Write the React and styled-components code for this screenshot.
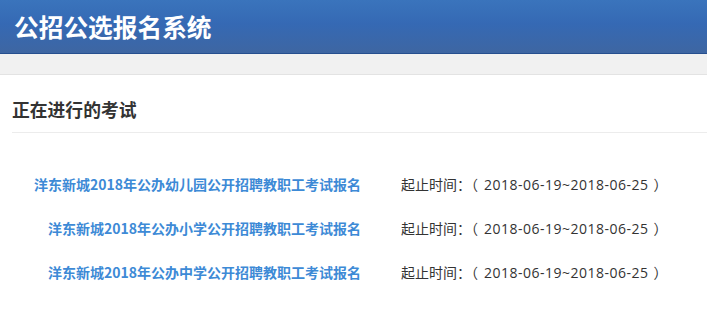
import React from "react";
import styled, { createGlobalStyle } from "styled-components";

const GlobalStyle = createGlobalStyle`
  body {
    margin: 0;
    background: #fff;
    font-family: "Noto Sans CJK SC", "Liberation Sans", sans-serif;
  }
`;

const Header = styled.header`
  height: 53px;
  display: flex;
  align-items: center;
  padding-left: 14px;
  background: linear-gradient(to bottom, #3a74bc 0%, #3569b4 45%, #3e66a2 100%);
  border-bottom: 1px solid #264f8f;
`;

const Brand = styled.h1`
  margin: 0;
  color: #fff;
  font-size: 24.7px;
  font-weight: 700;
  line-height: 1;
`;

const Strip = styled.div`
  height: 20px;
  background: #f1f1f1;
  border-bottom: 1px solid #e3e3e3;
`;

const Section = styled.section`
  padding: 0 0 0 12px;
`;

const SectionTitle = styled.h2`
  margin: 0;
  padding: 22px 0 11px;
  font-size: 17.8px;
  font-weight: 700;
  color: #333;
  line-height: 24px;
  border-bottom: 1px solid #ececec;
`;

const List = styled.div`
  display: flex;
  flex-direction: column;
  gap: 21px;
  padding-top: 40px;
`;

const Row = styled.div`
  display: grid;
  grid-template-columns: 349px auto;
  column-gap: 40px;
  align-items: center;
  line-height: 23px;
`;

const ExamLink = styled.a`
  text-align: right;
  color: #3d8ad6;
  font-size: 14px;
  font-weight: 700;
  text-decoration: none;
`;

const Period = styled.span`
  color: #333;
  font-size: 14px;
`;

const Dates = styled.span`
  font-family: "Open Sans", "Noto Sans CJK SC", sans-serif;
  letter-spacing: 0.5px;
  margin: 0 5px 0 6px;
`;

const exams = [
  "洋东新城2018年公办幼儿园公开招聘教职工考试报名",
  "洋东新城2018年公办小学公开招聘教职工考试报名",
  "洋东新城2018年公办中学公开招聘教职工考试报名",
];

export default function App() {
  return (
    <>
      <GlobalStyle />
      <Header>
        <Brand>公招公选报名系统</Brand>
      </Header>
      <Strip />
      <Section>
        <SectionTitle>正在进行的考试</SectionTitle>
        <List>
          {exams.map((name) => (
            <Row key={name}>
              <ExamLink href="#">{name}</ExamLink>
              <Period>
                起止时间：（<Dates>2018-06-19~2018-06-25</Dates>）
              </Period>
            </Row>
          ))}
        </List>
      </Section>
    </>
  );
}
